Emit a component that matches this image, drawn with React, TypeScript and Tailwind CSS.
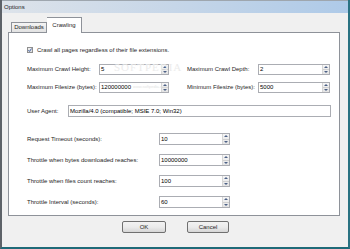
import React from 'react';

const font = { fontFamily: '"Liberation Sans", Arial, sans-serif' };

function Spinner() {
  return (
    <div className="flex flex-col w-[7px] h-full border-l border-[#d6d6d6] bg-gradient-to-b from-[#f6f6f6] to-[#e4e4e4]">
      <div className="flex-1 flex items-center justify-center border-b border-[#d0d0d0]">
        <svg width="4" height="2" viewBox="0 0 4 2"><path d="M0 2 L2 0 L4 2 Z" fill="#4d6185" /></svg>
      </div>
      <div className="flex-1 flex items-center justify-center">
        <svg width="4" height="2" viewBox="0 0 4 2"><path d="M0 0 L2 2 L4 0 Z" fill="#4d6185" /></svg>
      </div>
    </div>
  );
}

function NumInput({ value, w, h }: { value: string; w: string; h: string }) {
  return (
    <div className={`flex ${w} ${h} border border-[#abadb3] bg-white`}>
      <div className="flex-1 flex items-center pl-[1px] text-[6px] text-black overflow-hidden whitespace-nowrap">{value}</div>
      <Spinner />
    </div>
  );
}

function ThrottleRow({ label, value }: { label: string; value: string }) {
  return (
    <div className="flex items-center h-[12px]">
      <div className="w-[132px] text-[6px] text-[#1e1e1e] whitespace-nowrap">{label}</div>
      <NumInput value={value} w="w-[71px]" h="h-[12px]" />
    </div>
  );
}

export default function App() {
  return (
    <div className="w-[350px] h-[249px] flex flex-col bg-[#f0f0f0] border-l-2 border-l-[#5d6268] border-r-2 border-r-[#2a7282] border-b-2 border-b-[#1f6a78] overflow-hidden" style={font}>
      {/* title bar */}
      <div className="h-[13px] flex items-center pl-[2px] border-t border-[#9ea6ae] bg-gradient-to-r from-[#dde3ea] via-[#c6d6e8] to-[#aecae8]">
        <span className="text-[6px] text-[#1c1c1c]">Options</span>
      </div>

      <div className="flex-1 flex flex-col pl-[6px] pt-[4px]">
        {/* tabs */}
        <div className="flex items-end h-[15px] pl-[3px]">
          <div className="w-[36px] h-[10px] flex items-center justify-center border border-b-0 border-[#8e9299] bg-gradient-to-b from-[#f4f4f4] to-[#e2e2e2] text-[6px] text-[#1e1e1e]">
            Downloads
          </div>
          <div className="relative z-10 -mb-px w-[35px] h-[16px] flex items-start justify-center pt-[3px] border border-b-0 border-l-0 border-[#8e9299] bg-white text-[6px] text-[#1e1e1e]">
            Crawling
          </div>
        </div>

        {/* panel */}
        <div className="relative w-[332px] h-[184px] border border-[#8e9299] bg-white flex flex-col pt-[12px]">
          <div className="absolute left-[105px] top-[26px] text-[11px] tracking-[1px] text-[#ececec] pointer-events-none" style={{ fontFamily: '"Liberation Serif", serif' }}>
            SOFTPEDIA
          </div>
          <div className="absolute left-[124px] top-[51px] text-[4px] text-[#e4e4e4] pointer-events-none">www.softpedia.com</div>

          <div className="flex items-center h-[10px] pl-[18px]">
            <div className="w-[6px] h-[6px] border border-[#8f8f8f] bg-gradient-to-b from-[#f0f0f0] to-[#dcdcdc] flex items-center justify-center">
              <svg width="4" height="4" viewBox="0 0 4 4"><path d="M0.4 2.2 L1.5 3.4 L3.6 0.5" stroke="#2a4f9c" strokeWidth="0.9" fill="none" /></svg>
            </div>
            <span className="ml-[4px] text-[6px] text-[#1e1e1e] whitespace-nowrap">Crawl all pages regardless of their file extensions.</span>
          </div>

          <div className="flex items-center h-[11px] mt-[9px] pl-[18px]">
            <div className="w-[72px] text-[6px] text-[#1e1e1e] whitespace-nowrap">Maximum Crawl Height:</div>
            <NumInput value="5" w="w-[70px]" h="h-[11px]" />
            <div className="ml-[18px] w-[71px] text-[6px] text-[#1e1e1e] whitespace-nowrap">Maximum Crawl Depth:</div>
            <NumInput value="2" w="w-[72px]" h="h-[11px]" />
          </div>

          <div className="flex items-center h-[11px] mt-[7px] pl-[18px]">
            <div className="w-[72px] text-[6px] text-[#1e1e1e] whitespace-nowrap">Maximum Filesize (bytes):</div>
            <NumInput value="120000000" w="w-[70px]" h="h-[11px]" />
            <div className="ml-[18px] w-[71px] text-[6px] text-[#1e1e1e] whitespace-nowrap">Minimum Filesize (bytes):</div>
            <NumInput value="5000" w="w-[72px]" h="h-[11px]" />
          </div>

          <div className="flex items-center h-[12px] mt-[12px] pl-[18px]">
            <div className="w-[41px] text-[6px] text-[#1e1e1e] whitespace-nowrap">User Agent:</div>
            <div className="w-[263px] h-[12px] border border-[#abadb3] bg-white flex items-center pl-[1px] text-[6px] text-black whitespace-nowrap">
              Mozilla/4.0 (compatible; MSIE 7.0; Win32)
            </div>
          </div>

          <div className="flex flex-col gap-[9px] mt-[16px] pl-[18px]">
            <ThrottleRow label="Request Timeout (seconds):" value="10" />
            <ThrottleRow label="Throttle when bytes downloaded reaches:" value="10000000" />
            <ThrottleRow label="Throttle when files count reaches:" value="100" />
            <ThrottleRow label="Throttle Interval (seconds):" value="60" />
          </div>
        </div>

        {/* buttons */}
        <div className="flex mt-[5px] pl-[114px] gap-[21px]">
          <button className="w-[44px] h-[12px] rounded-[2px] border border-[#707070] bg-gradient-to-b from-[#f2f2f2] via-[#ebebeb] to-[#d6d6d6] text-[6px] text-[#1e1e1e] flex items-center justify-center">
            OK
          </button>
          <button className="w-[42px] h-[12px] rounded-[2px] border border-[#707070] bg-gradient-to-b from-[#f2f2f2] via-[#ebebeb] to-[#d6d6d6] text-[6px] text-[#1e1e1e] flex items-center justify-center">
            Cancel
          </button>
        </div>
      </div>
    </div>
  );
}
